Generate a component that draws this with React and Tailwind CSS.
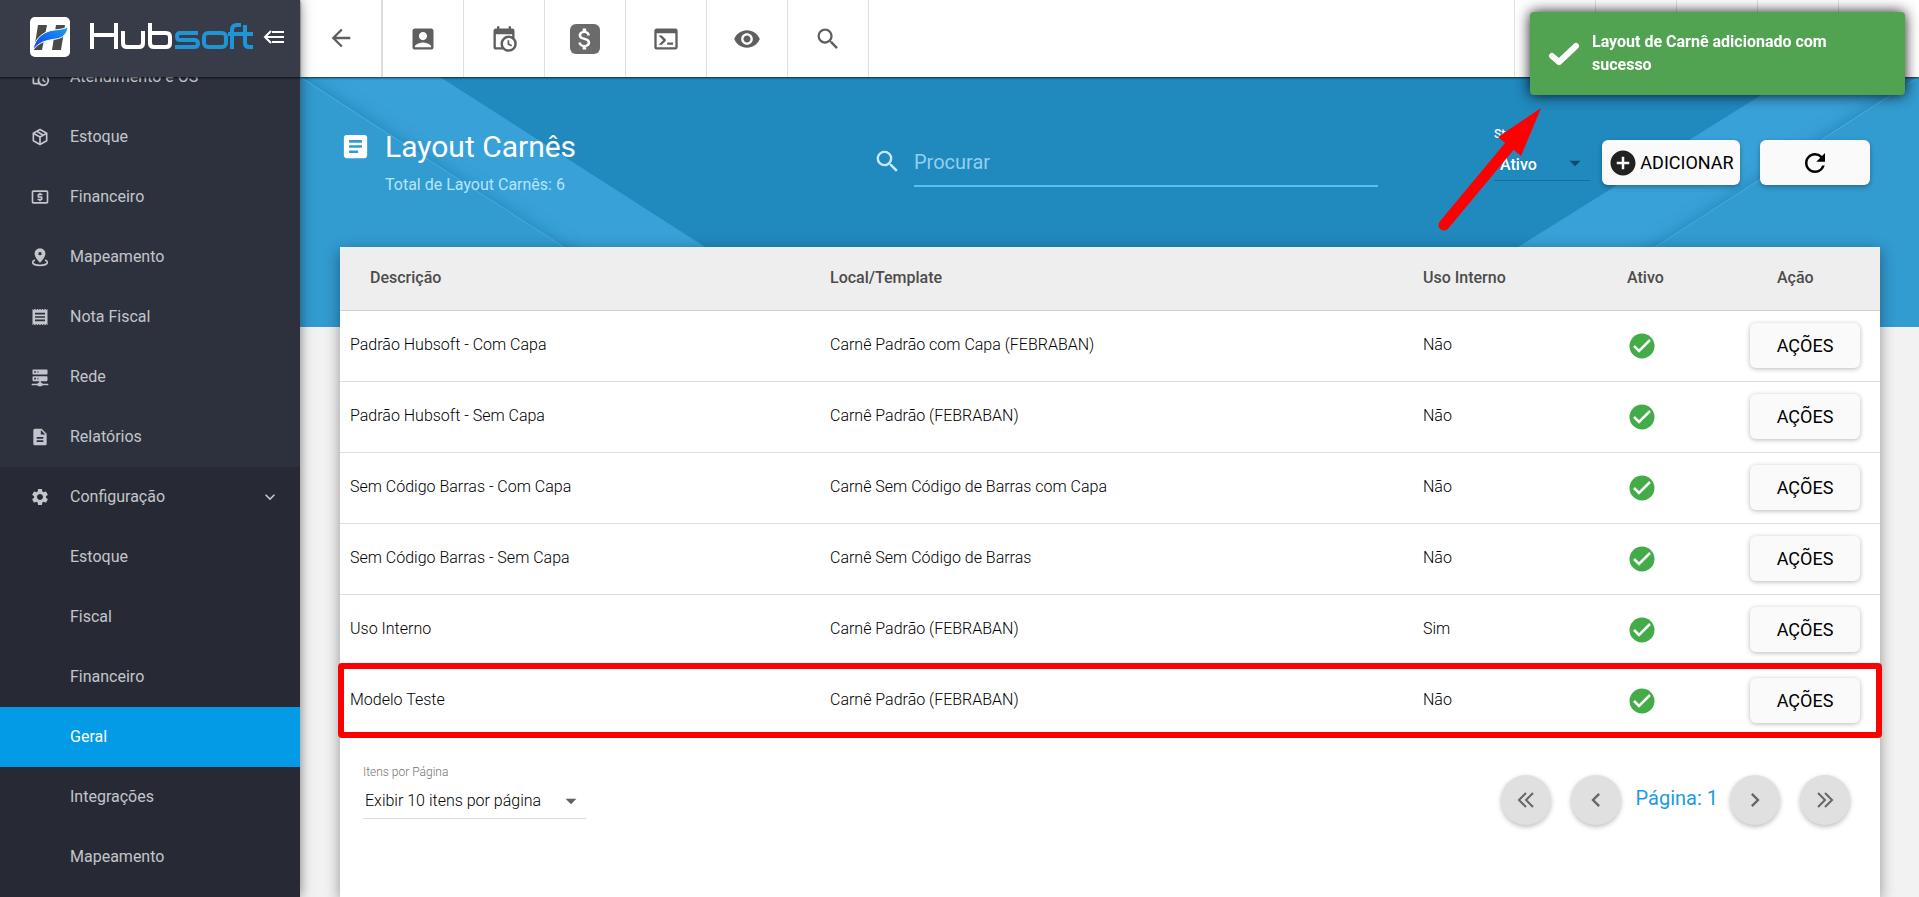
import {
  MdAccountBox,
  MdRemoveRedEye,
  MdSearch,
  MdLocalAtm,
  MdReceipt,
  MdSettings,
  MdDescription,
  MdArticle,
  MdAttachMoney,
  MdArrowBack,
  MdExpandMore,
  MdRefresh,
  MdAddCircle,
  MdKeyboardArrowLeft,
  MdKeyboardArrowRight,
  MdArrowDropDown,
} from "react-icons/md";

const CALENDAR_CLOCK =
  "M15,13H16.5V15.82L18.94,17.23L18.19,18.53L15,16.69V13M19,8H5V19H9.67C9.24,18.09 9,17.07 9,16A7,7 0 0,1 16,9C17.07,9 18.09,9.24 19,9.67V8M5,21C3.89,21 3,20.1 3,19V5C3,3.89 3.89,3 5,3H6V1H8V3H16V1H18V3H19A2,2 0 0,1 21,5V11.1C22.24,12.36 23,14.09 23,16A7,7 0 0,1 16,23C14.09,23 12.36,22.24 11.1,21H5M16,11.15A4.85,4.85 0 0,0 11.15,16C11.15,18.68 13.32,20.85 16,20.85A4.85,4.85 0 0,0 20.85,16C20.85,13.32 18.68,11.15 16,11.15Z";
const PACKAGE =
  "M21,16.5C21,16.88 20.79,17.21 20.47,17.38L12.57,21.82C12.41,21.94 12.21,22 12,22C11.79,22 11.59,21.94 11.43,21.82L3.53,17.38C3.21,17.21 3,16.88 3,16.5V7.5C3,7.12 3.21,6.79 3.53,6.62L11.43,2.18C11.59,2.06 11.79,2 12,2C12.21,2 12.41,2.06 12.57,2.18L20.47,6.62C20.79,6.79 21,7.12 21,7.5V16.5M12,4.15L10.11,5.22L16,8.61L17.96,7.5L12,4.15M6.04,7.5L12,10.85L13.96,9.75L8.08,6.35L6.04,7.5M5,15.91L11,19.29V12.58L5,9.21V15.91M19,15.91V9.21L13,12.58V19.29L19,15.91Z";
const SERVER_NETWORK =
  "M13,19H14A1,1 0 0,1 15,20H22V22H15A1,1 0 0,1 14,23H10A1,1 0 0,1 9,22H2V20H9A1,1 0 0,1 10,19H11V17H4A1,1 0 0,1 3,16V12A1,1 0 0,1 4,11H20A1,1 0 0,1 21,12V16A1,1 0 0,1 20,17H13V19M4,3H20A1,1 0 0,1 21,4V8A1,1 0 0,1 20,9H4A1,1 0 0,1 3,8V4A1,1 0 0,1 4,3M9,7H10V5H9V7M9,15H10V13H9V15M5,5V7H7V5H5M5,13V15H7V13H5Z";
const CONSOLE =
  "M20,19V7H4V19H20M20,3A2,2 0 0,1 22,5V19A2,2 0 0,1 20,21H4A2,2 0 0,1 2,19V5C2,3.89 2.9,3 4,3H20M13,17V15H18V17H13M9.58,13L5.57,9H8.4L11.7,12.3C12.09,12.69 12.09,13.33 11.7,13.72L8.42,17H5.59L9.58,13Z";

function PathIcon({ d, size = 20 }) {
  return (
    <svg width={size} height={size} viewBox="0 0 24 24" fill="currentColor" aria-hidden="true">
      <path d={d} />
    </svg>
  );
}

function CalendarIcon({ size }) {
  return <PathIcon d={CALENDAR_CLOCK} size={size} />;
}

function PackageIcon({ size }) {
  return <PathIcon d={PACKAGE} size={size} />;
}

function ServerIcon({ size }) {
  return <PathIcon d={SERVER_NETWORK} size={size} />;
}

function ConsoleIcon({ size }) {
  return <PathIcon d={CONSOLE} size={size} />;
}

function PinIcon({ size }) {
  return (
    <svg width={size} height={size} viewBox="0 0 24 24" aria-hidden="true">
      <path
        fill="currentColor"
        fillRule="evenodd"
        d="M12 1.5a6.5 6.5 0 0 0-6.5 6.5c0 4.6 6.5 11 6.5 11s6.5-6.4 6.5-11A6.5 6.5 0 0 0 12 1.5zM12 10a2 2 0 1 1 0-4 2 2 0 0 1 0 4z"
      />
      <path
        fill="none"
        stroke="currentColor"
        strokeWidth="2"
        d="M6 15.5c-1.800.7-2.800 1.700-2.800 2.800 0 2.100 3.900 3.700 8.800 3.700s8.800-1.600 8.800-3.700c0-1.100-1-2.100-2.800-2.800"
      />
    </svg>
  );
}

function DollarIcon() {
  return (
    <span className="grid h-[30px] w-[30px] place-items-center rounded-md bg-[#6b6b6b] text-white">
      <MdAttachMoney size={28} />
    </span>
  );
}

const menu = [
  { label: "Atendimento e OS", Icon: CalendarIcon },
  { label: "Estoque", Icon: PackageIcon },
  { label: "Financeiro", Icon: MdLocalAtm },
  { label: "Mapeamento", Icon: PinIcon },
  { label: "Nota Fiscal", Icon: MdReceipt },
  { label: "Rede", Icon: ServerIcon },
  { label: "Relatórios", Icon: MdDescription },
];

const submenu = ["Estoque", "Fiscal", "Financeiro", "Geral", "Integrações", "Mapeamento"];

const shortcuts = [
  { label: "Clientes", Icon: MdAccountBox },
  { label: "Agenda", Icon: CalendarIcon },
  { label: "Financeiro", Icon: DollarIcon },
  { label: "Terminal", Icon: ConsoleIcon },
  { label: "Visualizar", Icon: MdRemoveRedEye },
  { label: "Pesquisar", Icon: MdSearch },
];

const rows = [
  { name: "Padrão Hubsoft - Com Capa", template: "Carnê Padrão com Capa (FEBRABAN)", internal: "Não" },
  { name: "Padrão Hubsoft - Sem Capa", template: "Carnê Padrão (FEBRABAN)", internal: "Não" },
  { name: "Sem Código Barras - Com Capa", template: "Carnê Sem Código de Barras com Capa", internal: "Não" },
  { name: "Sem Código Barras - Sem Capa", template: "Carnê Sem Código de Barras", internal: "Não" },
  { name: "Uso Interno", template: "Carnê Padrão (FEBRABAN)", internal: "Sim" },
  { name: "Modelo Teste", template: "Carnê Padrão (FEBRABAN)", internal: "Não", highlight: true },
];

function Logo() {
  return (
    <div className="flex items-center gap-[18px]">
      <svg width="40" height="40" viewBox="0 0 40 40" aria-hidden="true">
        <defs>
          <linearGradient id="swoosh" x1="0" y1="1" x2="1" y2="0">
            <stop offset="0" stopColor="#0b3df0" />
            <stop offset="1" stopColor="#1ea0f0" />
          </linearGradient>
        </defs>
        <rect width="40" height="40" rx="5" fill="#fff" />
        <path d="M8 8h9l-5 25H4zM26 8h9l-4 25h-9z" fill="#4a4a4a" />
        <path
          d="M3 33C5 20 15 14 24 13c6-.6 10-1 14-3-1 7-5 11-12 12-10 1.500-17 3-23 11z"
          fill="url(#swoosh)"
          stroke="#fff"
          strokeWidth="1"
        />
      </svg>
      {/* wordmark */}
      <svg width="165" height="28" viewBox="0 0 165 28" fill="none" strokeWidth="4" role="img" aria-label="Hubsoft">
        <g stroke="#fff">
          <path d="M4 0v26M28 0v26M4 12h24" />
          <path d="M35 8v12q0 4 4 4h12q4 0 4-4V8" />
          <path d="M62 0v20q0 4 4 4h12q4 0 4-4v-6q0-4-4-4H62" />
        </g>
        <g stroke="#1d95d6">
          <path d="M110 10H92q-3 0-3 3.500t3 3.500h14q4 0 4 3.500t-4 3.500H87" />
          <rect x="116" y="10" width="22" height="14" rx="4" />
          <path d="M144 26V7q0-5 5-5h4M140 11h13" />
          <path d="M157 2v18q0 4 4 4h4M153 11h12" />
        </g>
      </svg>
    </div>
  );
}

function Sidebar() {
  return (
    <aside className="z-20 flex w-[300px] shrink-0 flex-col bg-[#2d313e] shadow-[0_0_12px_rgba(0,0,0,0.5)]">
      <div className="z-10 flex h-[77px] shrink-0 items-center bg-[#383c48] pb-[3px] pl-[30px] shadow-[0_1px_2px_rgba(0,0,0,0.7)]">
        <Logo />
        <button type="button" aria-label="Recolher menu" className="ml-[10px] text-white">
          <svg width="22" height="18" viewBox="0 0 22 18" fill="none" stroke="currentColor" strokeWidth="2" aria-hidden="true">
            <path d="M8 3L2 9l6 6M2 9h19M9 4h12M9 14h12" />
          </svg>
        </button>
      </div>
      <nav className="min-h-0 flex-1 overflow-hidden text-base text-[#c3c5ca]">
        <ul className="-mt-[30px]">
          {menu.map(({ label, Icon }) => (
            <li key={label}>
              <a href="#" className="flex h-[60px] items-center gap-5 pl-[30px]">
                <Icon size={20} />
                <span>{label}</span>
              </a>
            </li>
          ))}
          <li className="bg-[#272a35] pb-4">
            <a href="#" className="flex h-[60px] items-center gap-5 pr-5 pl-[30px]">
              <MdSettings size={20} />
              <span className="flex-1">Configuração</span>
              <MdExpandMore size={20} />
            </a>
            <ul>
              {submenu.map((label) => (
                <li key={label}>
                  <a
                    href="#"
                    className={`flex h-[60px] items-center pl-[70px] ${label === "Geral" ? "bg-[#039be5] text-white" : ""}`}
                  >
                    {label}
                  </a>
                </li>
              ))}
            </ul>
          </li>
        </ul>
      </nav>
    </aside>
  );
}

function Toolbar() {
  return (
    <header className="z-10 flex h-[77px] shrink-0 justify-between bg-white text-[#5f5f5f] shadow-[0_1px_2px_rgba(0,0,0,0.7)]">
      <div className="flex">
        <button type="button" aria-label="Voltar" className="grid w-[83px] place-items-center border-r-2 border-[#dedede] pb-[2px]">
          <MdArrowBack size={28} />
        </button>
        {shortcuts.map(({ label, Icon }) => (
          <button key={label} type="button" aria-label={label} className="grid w-[81px] place-items-center border-r border-[#e0e0e0]">
            <Icon size={28} />
          </button>
        ))}
      </div>
      <div className="flex">
        {[1, 2, 3, 4, 5].map((n) => (
          <div key={n} className="w-[81px] border-l border-[#e0e0e0]" />
        ))}
      </div>
    </header>
  );
}

function HeroBackground() {
  return (
    <svg className="absolute inset-0 h-full w-full" viewBox="0 0 1619 250" preserveAspectRatio="none" aria-hidden="true">
      <defs>
        <filter id="soft" x="-10%" y="-10%" width="120%" height="120%">
          <feDropShadow dx="0" dy="0" stdDeviation="9" floodColor="#0a5f94" floodOpacity="0.45" />
        </filter>
      </defs>
      <rect width="1619" height="250" fill="#2089be" />
      <path d="M0 0H140L530 250H-10zM1619 0H1490L1090 250H1619z" fill="#38a1d7" />
      <g filter="url(#soft)" fill="#319bd0">
        <path d="M-40 -27L394 255H-40zM1659 -27L1225 255H1659z" />
      </g>
      <path d="M0 0L388 250M1619 0L1231 250" stroke="#5bb8e4" strokeOpacity="0.6" />
    </svg>
  );
}

function PageHeader() {
  return (
    <div className="relative flex h-[170px] items-start pr-[49px] pl-10 text-white">
      <div className="flex flex-1 items-start gap-[14px] pt-[54px]">
        <MdArticle size={31} />
        <div>
          <h1 className="text-3xl leading-8">Layout Carnês</h1>
          <p className="mt-[10px] text-base leading-6 text-[#b3e5fc]">Total de Layout Carnês: 6</p>
        </div>
      </div>
      <div className="flex items-start gap-3 pt-[66px]">
        <MdSearch size={29} className="mt-1 text-[#c5e9fb]" />
        <input
          aria-label="Procurar"
          placeholder="Procurar"
          className="h-[44px] w-[464px] border-b-2 border-[#4fc3f7] bg-transparent pb-1 text-xl outline-none placeholder:text-[#8fd0f0]"
        />
      </div>
      <div className="flex items-start">
        <div className="ml-[116px] w-[96px] pt-[49px]">
          <label htmlFor="status" className="block text-xs leading-4 font-medium">
            Status
          </label>
          <div className="relative mt-2 border-b border-[#176d9b]">
            <select id="status" className="h-[30px] w-full appearance-none bg-transparent pl-[6px] text-base font-medium">
              <option>Ativo</option>
            </select>
            <MdArrowDropDown size={26} className="pointer-events-none absolute top-0 right-[2px] text-[#114b6b]" />
          </div>
        </div>
        <div className="flex gap-5 pt-[63px] pl-3">
          <button
            type="button"
            className="flex h-[45px] w-[138px] items-center justify-center gap-[2px] rounded-md bg-[#fafafa] text-lg font-normal text-black shadow-[0_2px_5px_rgba(0,0,0,0.3)]"
          >
            <MdAddCircle size={30} className="text-[#212121]" />
            ADICIONAR
          </button>
          <button
            type="button"
            aria-label="Atualizar"
            className="grid h-[45px] w-[110px] place-items-center rounded-md bg-[#fafafa] text-black shadow-[0_2px_5px_rgba(0,0,0,0.3)]"
          >
            <MdRefresh size={30} />
          </button>
        </div>
      </div>
    </div>
  );
}

function CheckIcon() {
  return (
    <svg width="26" height="26" viewBox="0 0 26 26" aria-label="Ativo" role="img">
      <circle cx="13" cy="13" r="12.5" fill="#43ab47" />
      <path d="M5 13l5 5 11-11" fill="none" stroke="#fff" strokeWidth="2.5" />
    </svg>
  );
}

function LayoutTable() {
  return (
    <table className="w-full table-fixed text-left text-base">
      <colgroup>
        <col />
        <col className="w-[593px]" />
        <col className="w-[190px]" />
        <col className="w-[137px]" />
        <col className="w-[138px]" />
      </colgroup>
      <thead>
        <tr className="h-[63px] border-b border-[#d0d0d0] bg-[#eeeeee] text-[#4c4c4c]">
          <th className="pl-[30px] font-medium">Descrição</th>
          <th className="pl-2 font-medium">Local/Template</th>
          <th className="pl-2 font-medium">Uso Interno</th>
          <th className="pl-[22px] font-medium">Ativo</th>
          <th className="pl-[35px] font-medium">Ação</th>
        </tr>
      </thead>
      <tbody>
        {rows.map((row) => (
          <tr
            key={row.name}
            className={`h-[71px] ${row.highlight ? "rounded-xs outline-6 -outline-offset-4 outline-[#ff0000]" : "border-b border-[#dedede]"}`}
          >
            <td className="pb-[2px] pl-[10px] font-light">{row.name}</td>
            <td className="pb-[2px] pl-2 font-light">{row.template}</td>
            <td className="pb-[2px] pl-2 font-light">{row.internal}</td>
            <td className="pl-6">
              <CheckIcon />
            </td>
            <td className="pl-2">
              <button
                type="button"
                className="h-[45px] w-[110px] rounded-md bg-[#fafafa] text-lg text-black shadow-[0_1px_5px_rgba(0,0,0,0.28)]"
              >
                AÇÕES
              </button>
            </td>
          </tr>
        ))}
      </tbody>
    </table>
  );
}

function PageButton({ label, children }) {
  return (
    <button
      type="button"
      aria-label={label}
      className="grid size-[50px] place-items-center rounded-full bg-[#e0e0e0] text-[#666666] shadow-[0_2px_5px_rgba(0,0,0,0.26)]"
    >
      {children}
    </button>
  );
}

function DoubleChevron({ d }) {
  return (
    <svg width="20" height="20" viewBox="0 0 20 20" fill="none" stroke="currentColor" strokeWidth="2" aria-hidden="true">
      <path d={d} />
    </svg>
  );
}

function Pagination() {
  return (
    <div className="flex items-start justify-between pt-7 pr-[30px] pl-[23px]">
      <div className="w-[223px]">
        <label htmlFor="per-page" className="block text-xs leading-4 font-light text-[#757575]">
          Itens por Página
        </label>
        <div className="relative mt-1 border-b border-[#dcdcdc]">
          <select id="per-page" className="h-[34px] w-full appearance-none bg-transparent pl-[2px] text-base font-light text-black">
            <option>Exibir 10 itens por página</option>
          </select>
          <MdArrowDropDown size={26} className="pointer-events-none absolute top-1 right-[2px] text-[#616161]" />
        </div>
      </div>
      <div className="flex items-center pt-[11px]">
        <PageButton label="Primeira página">
          <DoubleChevron d="M10 3l-7 7 7 7M17 3l-7 7 7 7" />
        </PageButton>
        <div className="ml-5">
          <PageButton label="Página anterior">
            <MdKeyboardArrowLeft size={28} />
          </PageButton>
        </div>
        <span className="pr-3 pb-1 pl-[15px] text-xl font-normal text-[#1e9be0]">Página: 1</span>
        <PageButton label="Próxima página">
          <MdKeyboardArrowRight size={28} />
        </PageButton>
        <div className="ml-5">
          <PageButton label="Última página">
            <DoubleChevron d="M3 3l7 7-7 7M10 3l7 7-7 7" />
          </PageButton>
        </div>
      </div>
    </div>
  );
}

function Toast() {
  return (
    <div
      role="status"
      className="fixed top-3 right-[14px] z-30 flex h-[83px] w-[375px] items-start rounded-sm bg-[#51a351] pt-[18px] pl-[18px] text-white shadow-[0_0_14px_rgba(0,0,0,0.9)]"
    >
      <svg
        width="32"
        height="24"
        viewBox="0 0 32 24"
        className="mt-3"
        fill="none"
        stroke="currentColor"
        strokeWidth="6"
        strokeLinecap="round"
        strokeLinejoin="round"
        aria-hidden="true"
      >
        <path d="M4 14l7 6L28 4" />
      </svg>
      <p className="ml-3 w-[270px] text-base leading-[23px] font-bold">Layout de Carnê adicionado com sucesso</p>
    </div>
  );
}

function Arrow() {
  return (
    <svg className="fixed top-[106px] right-[374px] z-40" width="108" height="126" viewBox="0 0 108 126" fill="#ff0000" aria-hidden="true">
      <path d="M7 119L76 36" stroke="#ff0000" strokeWidth="11" strokeLinecap="round" />
      <path d="M104 2L84 50 61 31z" />
    </svg>
  );
}

export default function App() {
  return (
    <div className="flex h-screen overflow-hidden bg-[#f2f2f2] font-['Roboto',sans-serif]">
      <Sidebar />
      <div className="flex min-w-0 flex-1 flex-col">
        <Toolbar />
        <main className="relative flex min-h-0 flex-1 flex-col">
          <div className="absolute inset-x-0 top-0 h-[250px] overflow-hidden">
            <HeroBackground />
          </div>
          <PageHeader />
          <section className="relative mr-[39px] ml-10 flex-1 bg-white shadow-[0_4px_14px_rgba(0,0,0,0.4)]">
            <LayoutTable />
            <Pagination />
          </section>
        </main>
      </div>
      <Toast />
      <Arrow />
    </div>
  );
}
